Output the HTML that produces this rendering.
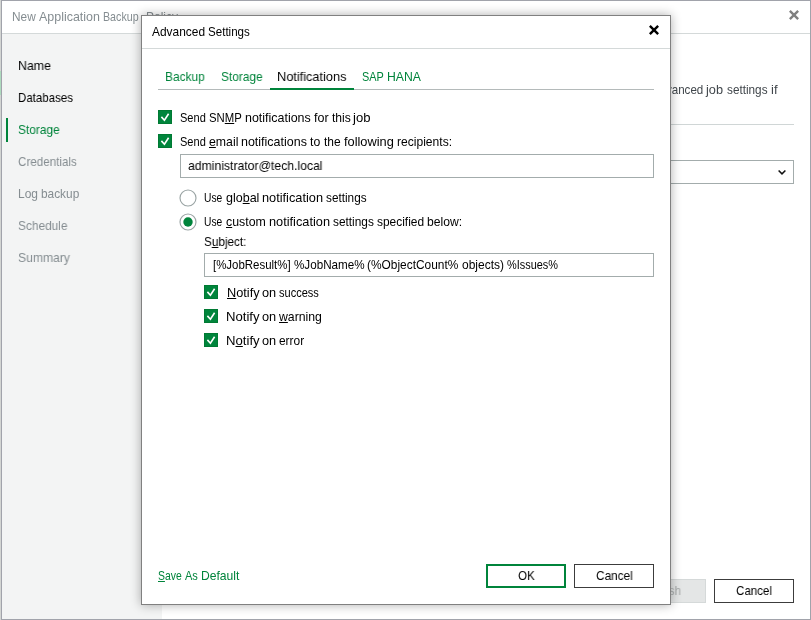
<!DOCTYPE html>
<html lang="en">
<head>
<meta charset="utf-8">
<title>New Application Backup Policy</title>
<style>
html,body{margin:0;padding:0;}
body{width:811px;height:620px;overflow:hidden;background:#d3d5d3;position:relative;
 font-family:"Liberation Sans",sans-serif;font-size:13px;color:#000;}
.abs{position:absolute;}
.t{position:absolute;white-space:nowrap;line-height:16px;height:16px;font-size:13px;margin-top:1px;will-change:transform;}
.w{position:absolute;top:0;display:block;transform:scaleX(var(--s,1));transform-origin:0 0;}
u{text-decoration:underline;text-underline-offset:1px;text-decoration-thickness:1px;}
#win{position:absolute;left:1px;top:0;width:808px;height:618px;border:1px solid #a1a3ab;background:#fff;overflow:hidden;}
#side{position:absolute;left:2px;top:34px;width:160px;height:585px;background:#f3f4f4;}
#tline{position:absolute;left:2px;top:33px;width:808px;height:1px;background:#d4d9d9;}
.g{color:#00843b;}
.dim{color:#858d91;}
#dlg{position:absolute;left:141px;top:15px;width:528px;height:588px;border:1px solid #808080;background:#fff;
 box-shadow:0 0 10px rgba(0,0,0,.32);}
.cb{position:absolute;width:12px;height:12px;border:1px solid #007a33;background:#00853c;}
.cb svg{position:absolute;left:-1px;top:-1px;}
.inp{position:absolute;height:22px;border:1px solid #a3acac;background:#fff;}
.btn{position:absolute;height:22px;border:1px solid #3c3c3c;background:#fff;}
</style>
</head>
<body>
<div id="win"></div>
<div id="tline"></div>
<div id="side"></div>
<div class="abs" style="left:0;top:71px;width:1px;height:24px;background:#addbbd;"></div>

<!-- main title -->
<div class="t dim" id="mt" style="left:12px;top:8px;"><span class="w" id="mt_0" style="--s:0.9112;left:-0.50px">New</span> <span class="w" id="mt_1" style="--s:0.9582;left:27.11px">Application</span> <span class="w" id="mt_2" style="--s:0.8204;left:90.56px">Backup</span> <span class="w" id="mt_3" style="--s:0.9203;left:133.65px">Policy</span></div>
<svg class="abs" style="left:789px;top:10px" width="10" height="10" viewBox="0 0 10 10"><path d="M.85 .85L9.15 9.15M9.15 .85L.85 9.15" stroke="#808080" stroke-width="2.4" fill="none"/></svg>

<!-- sidebar -->
<div class="abs" style="left:6px;top:118px;width:2px;height:24px;background:#00843b;"></div>
<div class="t " id="s1" style="left:18px;top:57px;"><span class="w" id="s1_0" style="--s:0.9500;left:-0.39px">Name</span></div>
<div class="t " id="s2" style="left:18px;top:89px;"><span class="w" id="s2_0" style="--s:0.8832;left:-0.19px">Databases</span></div>
<div class="t g" id="s3" style="left:18px;top:121px;"><span class="w" id="s3_0" style="--s:0.9173;left:-0.25px">Storage</span></div>
<div class="t dim" id="s4" style="left:18px;top:153px;"><span class="w" id="s4_0" style="--s:0.8934;left:0.42px">Credentials</span></div>
<div class="t dim" id="s5" style="left:18px;top:185px;"><span class="w" id="s5_0" style="--s:0.9208;left:-0.26px">Log</span> <span class="w" id="s5_1" style="--s:0.9120;left:23.10px">backup</span></div>
<div class="t dim" id="s6" style="left:18px;top:217px;"><span class="w" id="s6_0" style="--s:0.9136;left:0.09px">Schedule</span></div>
<div class="t dim" id="s7" style="left:18px;top:249px;"><span class="w" id="s7_0" style="--s:0.9344;left:-0.38px">Summary</span></div>

<!-- main content behind dialog -->
<div class="t " id="m1" style="left:620px;top:81px;color:#41474c;"><span class="w" id="m1_0" style="--s:0.9369;left:-0.57px">the</span> <span class="w" id="m1_1" style="--s:0.8918;left:32.97px">advanced</span> <span class="w" id="m1_2" style="--s:0.9786;left:86.37px">job</span> <span class="w" id="m1_3" style="--s:0.9041;left:107.07px">settings</span> <span class="w" id="m1_4" style="--s:0.9980;left:150.72px">if</span></div>
<div class="abs" style="left:180px;top:124px;width:614px;height:1px;background:#d0d6d6;"></div>
<div class="inp" style="left:300px;top:160px;width:492px;"></div>
<svg class="abs" style="left:777px;top:168px" width="10" height="8" viewBox="0 0 10 8"><path d="M1.6 2.5L5 5.9L8.4 2.5" stroke="#111" stroke-width="1.5" fill="none"/></svg>
<div class="abs" style="left:626px;top:579px;width:78px;height:22px;border:1px solid #d5d9d9;background:#e4e6e6;"></div>
<div class="t " id="m2" style="left:650px;top:582px;color:#a9adad;"><span class="w" id="m2_0" style="--s:0.8935;left:-0.04px">Finish</span></div>
<div class="btn" style="left:714px;top:579px;width:78px;"></div>
<div class="t " id="m3" style="left:736px;top:582px;"><span class="w" id="m3_0" style="--s:0.8890;left:0.34px">Cancel</span></div>

<!-- dialog -->
<div id="dlg"></div>
<div class="t " id="d0" style="left:152px;top:23px;"><span class="w" id="d0_0" style="--s:0.9172;left:-0.30px">Advanced</span> <span class="w" id="d0_1" style="--s:0.8905;left:55.50px">Settings</span></div>
<svg class="abs" style="left:649px;top:25px" width="10" height="10" viewBox="0 0 10 10"><path d="M.85 .85L9.15 9.15M9.15 .85L.85 9.15" stroke="#000" stroke-width="2.4" fill="none"/></svg>
<div class="abs" style="left:142px;top:48px;width:528px;height:1px;background:#d4d9d9;"></div>

<div class="t g" id="tb1" style="left:166px;top:68px;"><span class="w" id="tb1_0" style="--s:0.9136;left:-0.84px">Backup</span></div>
<div class="t g" id="tb2" style="left:221px;top:68px;"><span class="w" id="tb2_0" style="--s:0.9163;left:0.18px">Storage</span></div>
<div class="t " id="tb3" style="left:278px;top:68px;"><span class="w" id="tb3_0" style="--s:0.9818;left:-0.90px">Notifications</span></div>
<div class="t g" id="tb4" style="left:362px;top:68px;"><span class="w" id="tb4_0" style="--s:0.8382;left:0.23px">SAP</span> <span class="w" id="tb4_1" style="--s:0.9387;left:24.68px">HANA</span></div>
<div class="abs" style="left:158px;top:89px;width:496px;height:1px;background:#b4baba;"></div>
<div class="abs" style="left:270px;top:88px;width:84px;height:2px;background:#00843b;"></div>

<div class="cb" style="left:158px;top:110px;"><svg width="14" height="14" viewBox="0 0 14 14"><path d="M3.4 6.9L6.4 10.2L10.6 3.7" stroke="#fff" stroke-width="1.6" fill="none"/></svg></div>
<div class="t " id="c1" style="left:180px;top:109px;"><span class="w" id="c1_0" style="--s:0.8486;left:-0.43px">Send</span> <span class="w" id="c1_1" style="--s:0.8730;left:28.82px">SN<u>M</u>P</span> <span class="w" id="c1_2" style="--s:0.9582;left:65.38px">notifications</span> <span class="w" id="c1_3" style="--s:0.9621;left:134.40px">for</span> <span class="w" id="c1_4" style="--s:0.9297;left:152.46px">this</span> <span class="w" id="c1_5" style="--s:1.0058;left:173.15px">job</span></div>
<div class="cb" style="left:158px;top:134px;"><svg width="14" height="14" viewBox="0 0 14 14"><path d="M3.4 6.9L6.4 10.2L10.6 3.7" stroke="#fff" stroke-width="1.6" fill="none"/></svg></div>
<div class="t " id="c2" style="left:180px;top:133px;"><span class="w" id="c2_0" style="--s:0.8487;left:-0.27px">Send</span> <span class="w" id="c2_1" style="--s:0.9466;left:29.08px"><u>e</u>mail</span> <span class="w" id="c2_2" style="--s:0.9594;left:60.70px">notifications</span> <span class="w" id="c2_3" style="--s:0.9425;left:130.14px">to</span> <span class="w" id="c2_4" style="--s:0.9200;left:143.98px">the</span> <span class="w" id="c2_5" style="--s:0.9851;left:164.27px">following</span> <span class="w" id="c2_6" style="--s:0.9291;left:216.87px">recipients:</span></div>
<div class="inp" style="left:180px;top:154px;width:472px;"></div>
<div class="t " id="i1" style="left:189px;top:157px;"><span class="w" id="i1_0" style="--s:0.9388;left:-0.66px">administrator@tech.local</span></div>

<svg class="abs" style="left:178px;top:188px" width="20" height="20" viewBox="0 0 20 20"><circle cx="10" cy="10" r="8" fill="#fff" stroke="#9aa4a4" stroke-width="1.15"/></svg>
<div class="t " id="r1" style="left:204px;top:189px;"><span class="w" id="r1_0" style="--s:0.7890;left:0.24px">Use</span> <span class="w" id="r1_1" style="--s:0.9617;left:22.10px">glo<u>b</u>al</span> <span class="w" id="r1_2" style="--s:0.9816;left:57.74px">notification</span> <span class="w" id="r1_3" style="--s:0.9057;left:122.02px">settings</span></div>
<svg class="abs" style="left:178px;top:212px" width="20" height="20" viewBox="0 0 20 20"><circle cx="10" cy="10" r="8" fill="#fff" stroke="#9aa4a4" stroke-width="1.15"/><circle cx="10" cy="10" r="4.7" fill="#00843b"/></svg>
<div class="t " id="r2" style="left:204px;top:213px;"><span class="w" id="r2_0" style="--s:0.7879;left:0.25px">Use</span> <span class="w" id="r2_1" style="--s:0.9512;left:22.00px"><u>c</u>ustom</span> <span class="w" id="r2_2" style="--s:0.9810;left:65.20px">notification</span> <span class="w" id="r2_3" style="--s:0.9115;left:129.23px">settings</span> <span class="w" id="r2_4" style="--s:0.9175;left:173.20px">specified</span> <span class="w" id="r2_5" style="--s:0.9341;left:223.43px">below:</span></div>
<div class="t " id="r3" style="left:204px;top:233px;"><span class="w" id="r3_0" style="--s:0.9014;left:-0.50px">S<u>u</u>bject:</span></div>
<div class="inp" style="left:204px;top:253px;width:448px;"></div>
<div class="t " id="i2" style="left:214px;top:256px;"><span class="w" id="i2_0" style="--s:0.8809;left:-0.71px">[%JobResult%]</span> <span class="w" id="i2_1" style="--s:0.8965;left:79.77px">%JobName%</span> <span class="w" id="i2_2" style="--s:0.9158;left:153.31px">(%ObjectCount%</span> <span class="w" id="i2_3" style="--s:0.9216;left:247.75px">objects)</span> <span class="w" id="i2_4" style="--s:0.8399;left:292.88px">%Issues%</span></div>

<div class="cb" style="left:204px;top:285px;"><svg width="14" height="14" viewBox="0 0 14 14"><path d="M3.4 6.9L6.4 10.2L10.6 3.7" stroke="#fff" stroke-width="1.6" fill="none"/></svg></div>
<div class="t " id="n1" style="left:226px;top:284px;"><span class="w" id="n1_0" style="--s:0.9817;left:0.96px"><u>N</u>otify</span> <span class="w" id="n1_1" style="--s:0.9807;left:35.98px">on</span> <span class="w" id="n1_2" style="--s:0.8476;left:53.20px">success</span></div>
<div class="cb" style="left:204px;top:309px;"><svg width="14" height="14" viewBox="0 0 14 14"><path d="M3.4 6.9L6.4 10.2L10.6 3.7" stroke="#fff" stroke-width="1.6" fill="none"/></svg></div>
<div class="t " id="n2" style="left:226px;top:308px;"><span class="w" id="n2_0" style="--s:1.0110;left:0.05px">Notify</span> <span class="w" id="n2_1" style="--s:0.9820;left:36.47px">on</span> <span class="w" id="n2_2" style="--s:0.9430;left:53.00px"><u>w</u>arning</span></div>
<div class="cb" style="left:204px;top:333px;"><svg width="14" height="14" viewBox="0 0 14 14"><path d="M3.4 6.9L6.4 10.2L10.6 3.7" stroke="#fff" stroke-width="1.6" fill="none"/></svg></div>
<div class="t " id="n3" style="left:226px;top:332px;"><span class="w" id="n3_0" style="--s:1.0113;left:-0.34px">N<u>o</u>tify</span> <span class="w" id="n3_1" style="--s:0.9803;left:36.34px">on</span> <span class="w" id="n3_2" style="--s:0.9158;left:53.45px">error</span></div>

<div class="t g" id="sv" style="left:158px;top:567px;"><span class="w" id="sv_0" style="--s:0.7996;left:0.46px"><u>S</u>ave</span> <span class="w" id="sv_1" style="--s:0.8504;left:27.01px">As</span> <span class="w" id="sv_2" style="--s:0.9328;left:42.67px">Default</span></div>
<div class="abs" style="left:486px;top:564px;width:76px;height:20px;border:2px solid #00843b;background:#fff;"></div>
<div class="t " id="b1" style="left:518px;top:567px;"><span class="w" id="b1_0" style="--s:0.8994;left:0.35px">OK</span></div>
<div class="btn" style="left:574px;top:564px;width:78px;"></div>
<div class="t " id="b2" style="left:596px;top:567px;"><span class="w" id="b2_0" style="--s:0.9103;left:-0.35px">Cancel</span></div>
</body>
</html>
